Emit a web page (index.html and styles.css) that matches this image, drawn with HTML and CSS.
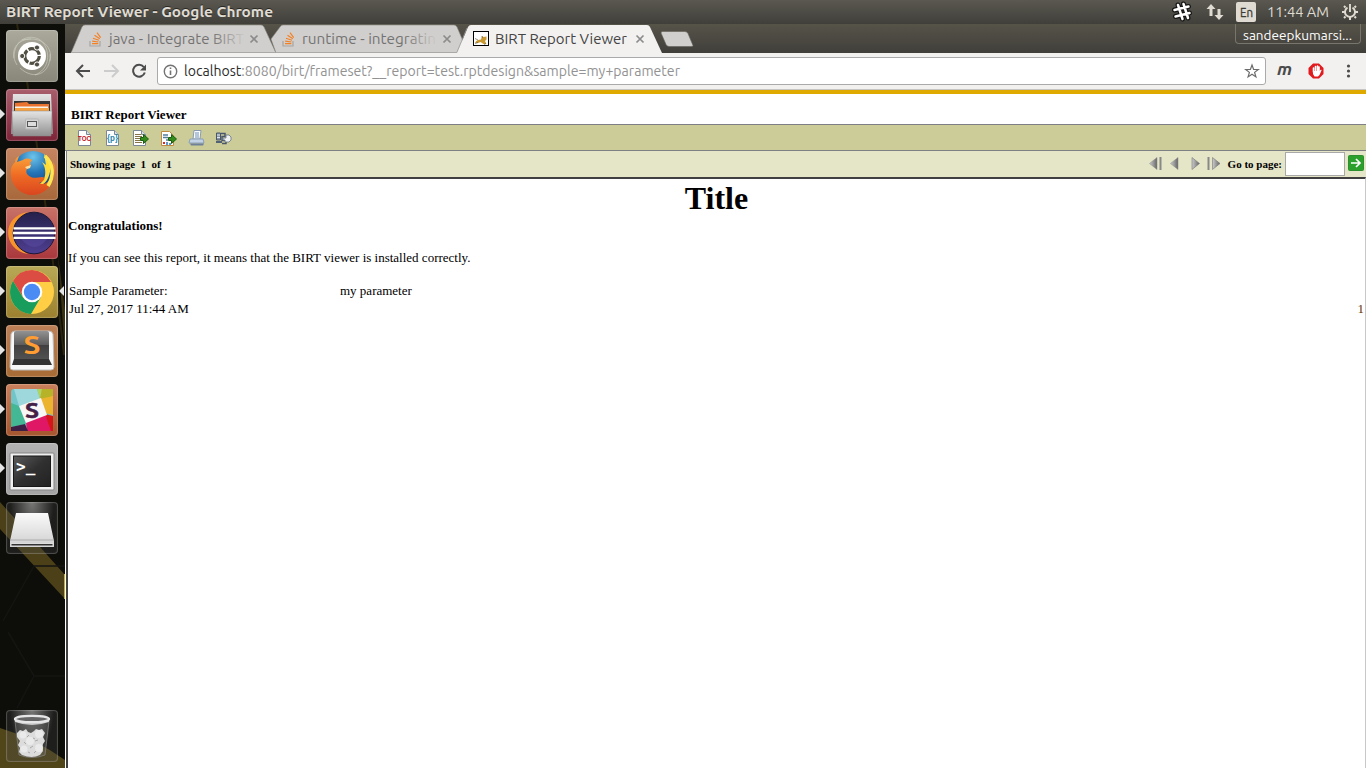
FILE: index.html
```html
<!DOCTYPE html>
<html lang="en">
<head>
<meta charset="utf-8">
<title>BIRT Report Viewer</title>
<link rel="stylesheet" href="styles.css">
</head>
<body>
<svg class="defs" width="0" height="0">
  <defs>
    <linearGradient id="metal" x1="0" y1="0" x2="0" y2="1"><stop offset="0" stop-color="#e4e4e4"/><stop offset="1" stop-color="#909090"/></linearGradient>
    <linearGradient id="key" x1="0" y1="0" x2="0" y2="1"><stop offset="0" stop-color="#929292"/><stop offset=".45" stop-color="#5b5b5b"/><stop offset=".46" stop-color="#404040"/><stop offset="1" stop-color="#555"/></linearGradient>
    <linearGradient id="fox" x1="0" y1="0" x2="0" y2="1"><stop offset="0" stop-color="#f9a23b"/><stop offset=".5" stop-color="#ef6b23"/><stop offset="1" stop-color="#d9461f"/></linearGradient>
    <radialGradient id="globe" cx=".5" cy=".15" r=".8"><stop offset="0" stop-color="#6cc4ea"/><stop offset=".5" stop-color="#2474b6"/><stop offset="1" stop-color="#143f80"/></radialGradient>
    <linearGradient id="ecl" x1="0" y1="0" x2="0" y2="1"><stop offset="0" stop-color="#24204a"/><stop offset="1" stop-color="#4f3f92"/></linearGradient>
    <linearGradient id="arrow" x1="0" y1="0" x2="1" y2="0"><stop offset="0" stop-color="#ccc"/><stop offset="1" stop-color="#666"/></linearGradient>
    <linearGradient id="screen" x1="0" y1="0" x2="1" y2="1"><stop offset="0" stop-color="#5a5a5a"/><stop offset=".5" stop-color="#303030"/><stop offset="1" stop-color="#222"/></linearGradient>
    <linearGradient id="fade" x1="0" y1="0" x2="1" y2="0"><stop offset=".76" stop-color="#727272"/><stop offset="1" stop-color="#727272" stop-opacity="0.05"/></linearGradient>
    <linearGradient id="grey" x1="0" y1="0" x2="0" y2="1"><stop offset="0" stop-color="#fafafa"/><stop offset="1" stop-color="#cfcfcf"/></linearGradient>
    <g id="so"><path d="M1 10v5h10v-5" fill="none" stroke="#a5a5a5" stroke-width="1.2"/><path d="M3 12.7h6.3M3.2 10.2l6.2.8M4 7.2l6 2M5.5 4.3l5.3 3.4M8 1.6l3.7 5" stroke="#f48024" stroke-width="1.2"/></g>
    <path id="close" d="M1 1l7 7M8 1l-7 7" fill="none" stroke="#8b8b8b" stroke-width="1.7"/>
    <g id="page"><path d="M1.5.5h8l4 4v11h-12z" fill="#fff" stroke="#7c8896"/><path d="M9.5.5v4h4" fill="#d6dfe8" stroke="#7c8896"/></g>
    <path id="go" d="M8.5 7.5h3v-3l5 4.5-5 4.5v-3h-3z" fill="#348b1b" stroke="#175f0c"/>
  </defs>
</svg>
<div class="screen">
  <header class="panel">
    <svg class="panel-title" width="275" height="24"><text class="ui bold halo" x="6" y="17" font-size="14" textLength="267" lengthAdjust="spacingAndGlyphs" fill="#dfdbd2">BIRT Report Viewer - Google Chrome</text></svg>
    <div class="indicators">
      <svg class="hash" width="22" height="22" viewBox="0 0 22 22"><g fill="none" stroke-linecap="round"><path d="M7 4l4.500 14M12.500 3l4.500 14M3.500 9l14-3.500M4.500 15.500l14-3.500" stroke="#161616" stroke-width="5"/><path d="M7 4l4.500 14M12.500 3l4.500 14M3.500 9l14-3.500M4.500 15.500l14-3.500" stroke="#fff" stroke-width="2.500"/></g></svg>
      <svg width="18" height="18" viewBox="0 0 18 18" fill="#dfdbd2"><path d="M5 1l4.500 5H6.500v7h-3V6H.5zM13 17l-4.500-5h3V6h3v6h3z"/></svg>
      <span class="lang"><svg width="20" height="20"><rect width="20" height="20" rx="2" fill="#dfdbd2"/><text class="ui" x="4" y="15" font-size="13" textLength="13" lengthAdjust="spacingAndGlyphs" fill="#3c3b37" stroke="#3c3b37" stroke-width=".3">En</text></svg></span>
      <svg width="62" height="20"><text class="ui" x="0" y="15" font-size="14" textLength="62" lengthAdjust="spacingAndGlyphs" fill="#dfdbd2">11:44 AM</text></svg>
      <svg width="18" height="18" viewBox="0 0 18 18" fill="none" stroke="#dfdbd2"><path d="M6.500 4.600a5 5 0 1 0 5 0M9 1v8" stroke-width="1.900"/><path d="M4.500 4.500L3 3M13.500 4.500L15 3M4 9H1M17 9h-3M4.500 13.500L3 15M13.500 13.500L15 15M9 14v3" stroke-width="2"/></svg>
    </div>
  </header>
  <div class="workspace">
    <nav class="launcher">
      <svg class="wallpaper" width="65" height="744" viewBox="0 24 65 744"><path d="M17 24Q42 160 64 355" fill="none" stroke="#403612" stroke-width="2" opacity=".6"/><path d="M58 255L65 355V310z" fill="#574a16" opacity=".6"/><path d="M0 502l65 73v24L0 529z" fill="#4b4018"/><path d="M64 574h1v25h-1zM64 760h1v8h-1z" fill="#c6a92e"/><path d="M0 728Q34 738 65 760v8H0z" fill="#51461a"/><path d="M8 632l26 44h31M34 676L17 708M65 566H34L3 621" fill="none" stroke="#141412" stroke-width="1.500"/></svg>
      <div class="tile dash"><svg viewBox="0 0 52 52"><path d="M8 28C8 4 31 3 38 14s4 26-9 31M16 10C38 5 47 19 44 31M44 24c1 20-16 27-30 14M11 35C2 20 12 9 25 9" fill="none" stroke="#d1d0c5" opacity=".6"/><circle cx="26" cy="26" r="14" fill="#fff"/><circle cx="26" cy="26" r="7.3" fill="none" stroke="#514f43" stroke-width="3.2" stroke-dasharray="13.8 1.5"/><g fill="#514f43" stroke="#fff" stroke-width="1"><circle cx="16.200" cy="26" r="2.600"/><circle cx="31" cy="17.500" r="2.600"/><circle cx="31" cy="34.500" r="2.600"/></g></svg></div>
      <div class="tile files running"><svg viewBox="0 0 52 52"><path d="M7 5h38l2 40H5z" fill="url(#metal)"/><path d="M8 12h36v12H8z" fill="#343434"/><path d="M9 14l12-1 2 2h20v7H9z" fill="#ea742f"/><path d="M9 17.500h33v5H9z" fill="#f9f4ea"/><path d="M9 19h34v4H9z" fill="#f8a142"/><path d="M6 22h40l-1 25H7z" fill="url(#metal)" stroke="#888" stroke-width=".5"/><rect x="19.500" y="30" width="13" height="10" rx="1" fill="#d4d4d4" stroke="#b5b5b5"/><rect x="21.500" y="32.500" width="9" height="5" fill="#ddd" stroke="#555"/></svg></div>
      <div class="tile firefox running"><svg viewBox="0 0 52 52"><circle cx="27" cy="23" r="20" fill="url(#globe)"/><path d="M38 6c8 6 8 15 4 24-3 7-10 10-15 9 15-4 14-18 9-25l4 3z" fill="#ffdc3a"/><path d="M13 8l-2 6 6-2c3-2 8-2 9 1-2 1-2 1-1 5-3 1-6 4-4 8 4 5 9 4 15 3 4 0 3 4-3 6 5 3 12-1 15-12l-1-9c2 3 2 6 2 7 1-4-2-8-3-10 4 5 4 13 1 20-3 10-11 16-21 16S6 39 5 28c-1-7 1-11 4-14 0-3 2-5 4-6z" fill="url(#fox)"/><path d="M39 8c9 8 9 20 3 30" fill="none" stroke="#ffe650" stroke-width="3.500"/><path d="M19 19l6-2-1 3-3 1z" fill="#ffe0a0"/></svg></div>
      <div class="tile eclipse running"><svg viewBox="0 0 52 52"><path d="M22 5C-5 9-4 43 22 47C8 39 5 13 22 5z" fill="#f7952a"/><circle cx="28" cy="26" r="20.800" fill="url(#ecl)" stroke="#1c193a"/><path d="M15 32h26q-12 16-26 0z" fill="#5c4ba6" opacity=".5"/><path d="M7.500 21.300h42M7 26h43M7.500 30.800h42" stroke="#fff" stroke-width="2.300"/></svg></div>
      <div class="tile chrome running focused"><svg viewBox="0 0 52 52"><circle cx="26" cy="26" r="22" fill="#ffce44"/><path d="M26 4A22 22 0 0 0 7 15l10 16 9-15h19A22 22 0 0 0 26 4z" fill="#db4c42"/><path d="M7 15a22 22 0 0 0 18 33l10-17-9 5c-6 0-9-4-11-8z" fill="#189d5c"/><circle cx="26" cy="26" r="10.300" fill="#fff"/><circle cx="26" cy="26" r="8.200" fill="#4b8bf4"/></svg></div>
      <div class="tile sublime running"><svg viewBox="0 0 52 52"><path d="M5 9q1-3 4-3h34q3 0 4 3l1 33q0 3-3 3H7q-3 0-3-3z" fill="#f7f7f7" stroke="#bbb"/><rect x="8" y="6" width="35" height="31" rx="2" fill="url(#key)"/><path d="M8 34h35l3 6H6z" fill="#333"/><text class="ui bold" x="17.500" y="29" font-size="25" textLength="17" lengthAdjust="spacingAndGlyphs" fill="#ff9d32">S</text></svg></div>
      <div class="tile slack running"><svg viewBox="0 0 52 52"><rect x="5" y="5" width="42" height="42" rx="3" fill="#6fc5c8"/><path d="M8 5h23l3 10-21 7z" fill="#9ed8dd"/><path d="M31 5h5l-2 10z" fill="#aed55d"/><path d="M36 5h11v26l-8-2-5-14z" fill="#ecb32e"/><path d="M36 5h11v7l-13 3z" fill="#b7b329"/><path d="M5 19l8 3 7 18-15 3z" fill="#44b894"/><path d="M20 38l19-8 8 17H21z" fill="#e01765"/><path d="M5 43l14-3 3 7H5z" fill="#3e1f45"/><path d="M39 30l8 2v15h-2z" fill="#d51518"/><path d="M13 22l22-8 6 17-21 8z" fill="#f9f6f6"/><text class="ui bold" x="19" y="34" font-size="22" textLength="14" lengthAdjust="spacingAndGlyphs" fill="#442047" stroke="#442047" stroke-width=".5">S</text></svg></div>
      <div class="tile terminal running"><svg viewBox="0 0 52 52"><rect x="4" y="10" width="44" height="37" rx="1" fill="#efefef" stroke="#858585"/><rect x="7.500" y="13" width="37" height="30.500" fill="url(#screen)" stroke="#181818"/><text class="mono" x="10" y="28.500" font-size="16" fill="#fff">&gt;_</text></svg></div>
      <div class="tile drive"><svg viewBox="0 0 52 52"><path d="M10 11h32l6 28v6H4v-6z" fill="url(#grey)"/><path d="M4 38h44" stroke="#aaa"/><path d="M5 41.500h42v2.500H5z" fill="#333" stroke="#ddd"/></svg></div>
      <div class="tile trash"><svg viewBox="0 0 52 52"><path d="M9 11l4 34q13 5 26 0l4-34" fill="#777" fill-opacity=".3" stroke="#888" stroke-width=".7"/><path d="M11 23l3-3 3 1 3-2 2 3 3 1 3-2 2-2 3 1 3-1 3 4-2 4 2 4-2 3-1 4 1 3-3 4q-8 4-18 0l-3-3 1-4-2-3 2-4-3-4z" fill="#dcdcdc"/><g fill="#eaeaea"><circle cx="17" cy="25" r="3.500"/><circle cx="33" cy="24" r="4"/><circle cx="24" cy="31" r="4"/><circle cx="18" cy="39" r="3.500"/><circle cx="33" cy="38" r="4"/></g><path d="M21 27l2-2M27 28l2 1M29 31l3-1M18 32l2 2M24 38l3-2M22 42l2 1M28 43l2-2" stroke="#aaa"/><path d="M9 9v3q17 6 34 0V9" fill="#c9c9c9"/><ellipse cx="26" cy="9" rx="17" ry="3.200" fill="#666" stroke="#e6e6e6" stroke-width="2.300"/></svg></div>
    </nav>
    <main class="browser">
      <div class="tabstrip">
        <div class="tab"><svg width="206" height="29"><path class="tab-shape" d="M6 29L17 3Q18 1 20 1H196Q198 1 199 3L211 29z"/><path d="M6 28.500h205" stroke="#aaa"/><g transform="translate(24 7)"><use href="#so"/></g><text class="ui" x="44" y="20" font-size="14" textLength="135" lengthAdjust="spacingAndGlyphs" fill="url(#fade)">java - Integrate BIRT</text><g transform="translate(184.500 10.500)"><use href="#close"/></g></svg></div>
        <div class="tab second"><svg width="206" height="29"><path class="tab-shape" d="M5 29L0 15L9 3Q10 1 12 1H183Q185 1 186 3L192 17L187 29z"/><path d="M5 28.500h182" stroke="#aaa"/><g transform="translate(11 7)"><use href="#so"/></g><text class="ui" x="31" y="20" font-size="14" textLength="134" lengthAdjust="spacingAndGlyphs" fill="url(#fade)">runtime - integratin</text><g transform="translate(171.500 10.500)"><use href="#close"/></g></svg></div>
        <div class="tab active"><svg width="207" height="29"><path d="M0 29L11 3Q12 1 14 1H190Q192 1 193 3L205 29z" fill="#f2f1f0"/><path d="M0 28L10 4" stroke="#999" stroke-width=".8"/><rect x="16.500" y="7.500" width="15" height="14" fill="#fff" stroke="#000"/><path d="M18 18.500q2-3 6-3l1-3.500 1.500 1 3-.5v3l-1.500 1.500 1.500 3h-3l-3-2-2.500 1h-3l1-1.500z" fill="#c99831"/><path d="M18 14.500l3 1.500M18 19.500l3-1M27 20.500l2-1M25 12l.5 2" stroke="#6d6350" stroke-width=".7"/><text class="ui" x="38" y="20" font-size="14" textLength="132" lengthAdjust="spacingAndGlyphs" fill="#444">BIRT Report Viewer</text><g transform="translate(178.500 10.500)"><use href="#close"/></g></svg></div>
        <svg class="newtab" width="36" height="29"><path d="M3 7.500h23q2 0 3 2l5 12q0 1-2 1H10q-2 0-3-2L2 9q0-1 1-1.500z" fill="#d0cfcd" stroke="#62615b" stroke-width=".6"/></svg>
        <span class="user"><svg width="125" height="18"><text class="ui" x="7" y="15.500" font-size="12.500" textLength="109" lengthAdjust="spacingAndGlyphs" fill="#fff">sandeepkumarsi...</text></svg></span>
      </div>
      <div class="chrome-bar">
        <svg class="history" width="84" height="28" fill="none" stroke-width="2"><path d="M15 8L9 14l6 6M9.500 14H22" stroke="#4c4c4c"/><path d="M44 8l6 6-6 6M49.500 14H36" stroke="#ccc"/><path d="M75.800 10a6 6 0 1 0 1 5.500" stroke="#4c4c4c"/><path d="M78 7.500v6h-6z" fill="#4c4c4c"/></svg>
        <div class="omnibox">
          <svg width="15" height="15" viewBox="0 0 15 15"><circle cx="7.500" cy="7.500" r="6.200" fill="none" stroke="#737373" stroke-width="1.400"/><path d="M7.500 6.500V11M7.500 3.500V5" stroke="#737373" stroke-width="1.600"/></svg>
          <svg width="500" height="24"><text class="ui" x="0" y="17" font-size="14" textLength="496" lengthAdjust="spacingAndGlyphs" fill="#929292"><tspan fill="#2b2b2b">localhost</tspan>:8080/birt/frameset?__report=test.rptdesign&amp;sample=my+parameter</text></svg>
          <svg class="star" width="16" height="16"><path d="M8 2l1.600 4.400 4.700.1-3.700 2.900 1.300 4.500L8 11.200l-3.900 2.700 1.300-4.500-3.700-2.900 4.700-.1z" fill="none" stroke="#6b6b6b" stroke-width="1.200"/></svg>
        </div>
        <svg class="extensions" width="90" height="28"><text class="ui m" x="2" y="18" font-size="17" textLength="15" lengthAdjust="spacingAndGlyphs" fill="#4b4b4b">m</text><path d="M38 6.500h6l4.500 4.500v6L44 21.500h-6L33.500 17v-6z" fill="#e01a1d"/><path d="M38.500 15v-4M40.500 14v-4.500M42.500 14V9M44 15v-5" stroke="#fff" stroke-width="1.600" stroke-linecap="round"/><path d="M38 14h6.500l1.500-1.500.6.800-2.100 4.700-1.500 1.500h-3.500L38 17z" fill="#fff"/><g fill="#4b4b4b"><circle cx="73.500" cy="9" r="1.600"/><circle cx="73.500" cy="14" r="1.600"/><circle cx="73.500" cy="19" r="1.600"/></g></svg>
      </div>
      <section class="birt">
        <div class="brand">BIRT Report Viewer</div>
        <div class="actions">
          <svg width="16" height="16"><use href="#page"/><path d="M2 5h11v6H2z" fill="#fff"/><text class="glyph" x="1" y="11" font-size="7.500" textLength="13" lengthAdjust="spacingAndGlyphs" fill="#c80c17">TOC</text></svg>
          <svg width="16" height="16"><use href="#page"/><text class="glyph" x="2" y="11" font-size="9" textLength="11" lengthAdjust="spacingAndGlyphs" fill="#2385ad">{p}</text></svg>
          <svg width="17" height="16"><use href="#page"/><path d="M3 4.500h6M3 6.500h7M3 8.500h6M3 10.500h5M3 12.500h7" stroke="#877348"/><use href="#go"/></svg>
          <svg width="17" height="16"><path d="M1.500 1.500h8l4 4v10h-12z" fill="#fff" stroke="#c18a42"/><path d="M3 5h5M3 7.500h5M6 10h2" stroke="#527d9d" stroke-width="1.300"/><path d="M3 12h2v2H3z" fill="#df2426"/><path d="M7 12v3M10 13v2" stroke="#2577bd" stroke-width="1.500"/><use href="#go"/></svg>
          <svg width="17" height="16"><path d="M5 9l1-8.500h7l-1 8.500z" fill="#f8fbff" stroke="#8b9baf"/><path d="M7 3h4M7 5h4M7 7h4" stroke="#6e91b4"/><path d="M2 9h13l1 4H1z" fill="#c3d3e5" stroke="#8ba0b9"/><path d="M2 13.500h14l-1 2H3z" fill="#6f8198"/></svg>
          <svg width="17" height="16"><path d="M.5 3h4v7h-4z" fill="#8b95a3" stroke="#4a5669"/><path d="M1 5h3M1 7.500h3" stroke="#dde5ed"/><path d="M5 3.500h4v3H6v4h4v3H6" fill="none" stroke="#4a5669" stroke-width="1.500"/><path d="M0 11h6v2H0z" fill="#536174"/><path d="M10 5h3l2 2v3l-2 2H9v-2H7V8h3z" fill="#f0f2f4" stroke="#627184" stroke-width=".8"/></svg>
        </div>
        <div class="paging">
          <span class="showing">Showing page&nbsp; 1&nbsp; of&nbsp; 1</span>
          <div class="pager">
            <svg width="14" height="14"><path d="M8 .5v12L.5 6.500z" fill="url(#arrow)" stroke="#888" stroke-width=".5"/><path d="M11.500 0v13" stroke="#888" stroke-width="2"/></svg>
            <svg width="9" height="14"><path d="M8 .5v12L.5 6.500z" fill="url(#arrow)" stroke="#888" stroke-width=".5"/></svg>
            <svg width="9" height="14"><path d="M1 .5v12l7.500-6z" fill="url(#arrow)" stroke="#777" stroke-width=".6"/></svg>
            <svg width="14" height="14"><path d="M1.500 0v13" stroke="#888" stroke-width="2"/><path d="M5.500.5v12l7.500-6z" fill="url(#arrow)" stroke="#777" stroke-width=".6"/></svg>
            <label>Go to page:</label><input aria-label="Page number">
            <svg class="gobtn" width="16" height="16"><rect x=".5" y=".5" width="15" height="15" rx="1" fill="#2ca02c" stroke="#2d8f2d"/><path d="M3 8h9M8 4l4 4-4 4" fill="none" stroke="#fff" stroke-width="1.700"/></svg>
          </div>
        </div>
        <article class="report">
          <h1>Title</h1>
          <p class="congrats">Congratulations!</p>
          <p class="message">If you can see this report, it means that the BIRT viewer is installed correctly.</p>
          <div class="parameter"><span>Sample Parameter:</span><span>my parameter</span></div>
          <div class="footer"><span>Jul 27, 2017 11:44 AM</span><span class="number">1</span></div>
        </article>
      </section>
    </main>
  </div>
</div>
</body>
</html>
```
FILE: styles.css
```css
* { box-sizing: border-box; }
body { margin: 0; overflow: hidden; font-family: "Liberation Serif", serif; color: #000; }
svg { display: block; flex: none; }
.defs { position: absolute; }
.screen { width: 1366px; height: 768px; overflow: hidden; display: flex; flex-direction: column; }
.ui { font-family: Ubuntu, "Noto Sans", sans-serif; }
.bold { font-weight: bold; }
.mono { font-family: "DejaVu Sans Mono", monospace; font-weight: bold; }
.glyph { font-family: "Liberation Sans", sans-serif; font-weight: bold; }
.halo { text-shadow: 0 -1px #282722; }
.m { font-weight: bold; font-style: italic; }
.panel { height: 24px; flex: none; display: flex; justify-content: space-between; background: linear-gradient(#5a5850, #403f3a); }
.indicators { display: flex; align-items: center; padding-right: 7px; gap: 12px; }
.hash { margin-right: 1px; }
.lang { margin: 0 -1px 0 -1px; padding-left: 1px; }
.workspace { display: flex; flex: 1; min-height: 0; }
.launcher { position: relative; width: 65px; flex: none; background: #0d0d0a; padding: 6px 0 6px 6px; display: flex; flex-direction: column; gap: 7px; }
.wallpaper { position: absolute; left: 0; top: 0; }
.tile { position: relative; width: 52px; height: 52px; flex: none; border-radius: 4px; box-shadow: inset 0 0 1px 1px rgba(255,255,255,.22); }
.tile svg { width: 52px; height: 52px; }
.running::before { content: ""; position: absolute; left: -6px; top: 20px; border: 5px solid transparent; border-left: 5px solid #e5e5e5; border-right: 0; }
.focused::after { content: ""; position: absolute; right: -6px; top: 20px; border: 5px solid transparent; border-right: 5px solid #e5e5e5; border-left: 0; }
.dash { background: linear-gradient(#aaa99b, #88877a); }
.files { background: linear-gradient(#a95e6c, #7d2438); }
.firefox { background: linear-gradient(#c68561, #a7683a); }
.eclipse { background: linear-gradient(#c87368, #a9373c); }
.chrome { background: linear-gradient(#b8a956, #9c812f); }
.sublime { background: linear-gradient(#bd8057, #a76b35); }
.slack { background: linear-gradient(#c9805b, #a5562f); }
.terminal { background: linear-gradient(#b2b2b2, #a4a4a4); }
.drive, .trash { background: radial-gradient(ellipse at 50% 0, rgba(155,155,155,.75), rgba(80,80,80,.25) 60%); }
.trash { margin-top: auto; }
.browser { flex: 1; min-width: 0; display: flex; flex-direction: column; background: #fff; }
.tabstrip { height: 29px; flex: none; display: flex; background: linear-gradient(#565349, #403f3a); }
.tab { width: 206px; flex: none; }
.tab svg { overflow: visible; }
.tab.active { width: 207px; margin-left: -20px; }
.tab-shape { fill: #d1cfcd; stroke: #8a8985; stroke-width: .6; }
.newtab { margin-left: -5px; }
.user { margin-left: auto; margin-right: 5px; width: 126px; height: 20px; border: 1px solid #77756d; border-top: 0; border-radius: 0 0 4px 4px; }
.chrome-bar { height: 37px; flex: none; background: #f2f1f0; border-bottom: 1px solid #c6c5c4; display: flex; padding-top: 4px; }
.history { margin-left: 3px; }
.omnibox { width: 1109px; margin-left: 5px; height: 28px; border: 1px solid #aaa; border-radius: 3px; background: #fff; display: flex; align-items: center; padding: 0 5px; }
.omnibox svg:nth-child(2) { margin-left: 6px; }
.star { margin-left: auto; }
.extensions { margin-left: 9px; }
.birt { flex: 1; min-height: 0; border-top: 4px solid #e0a900; display: flex; flex-direction: column; }
.brand { height: 30px; flex: none; padding: 13px 0 0 6px; font: bold 13px/16px "Liberation Serif", serif; }
.actions { height: 27px; flex: none; border: solid #7f7f86; border-width: 1px 0; background: #cc9; display: flex; gap: 12px; align-items: center; padding: 1px 0 0 12px; }
.actions svg { width: 16px; overflow: visible; }
.actions svg:nth-child(3) { margin-left: -1px; }
.paging { height: 26px; flex: none; margin-left: 1px; border-left: 1px solid #7f7f86; background: #e5e5c8; display: flex; justify-content: space-between; align-items: center; font: bold 11px "Liberation Serif", serif; padding: 0 2px 0 3px; }
.pager { display: flex; align-items: center; }
.pager svg:nth-child(2) { margin-left: 7px; }
.pager svg:nth-child(3) { margin-left: 12px; }
.pager svg:nth-child(4) { margin-left: 7px; }
.pager label { margin: 0 3px 1px 7px; }
.pager input { width: 60px; height: 24px; border: 1px solid #a9a9a9; padding: 0; margin: 0 3px 0 0; }
.gobtn { margin-bottom: 2px; }
.report { flex: 1; margin-left: 1px; border: solid #404040; border-width: 2px 1px 0 2px; border-right-color: #c8c8c8; font-size: 13px; line-height: 16px; }
.report h1 { margin: 0; font-size: 32px; line-height: 38px; text-align: center; }
.report p { margin: 0; }
.congrats { font-weight: bold; padding-top: 1px; }
.message { padding-top: 16px; }
.parameter { display: flex; padding: 17px 1px 0; }
.parameter span:first-child { width: 271px; }
.footer { display: flex; justify-content: space-between; padding: 2px 1px 0; }
.number { color: #630; }
```
